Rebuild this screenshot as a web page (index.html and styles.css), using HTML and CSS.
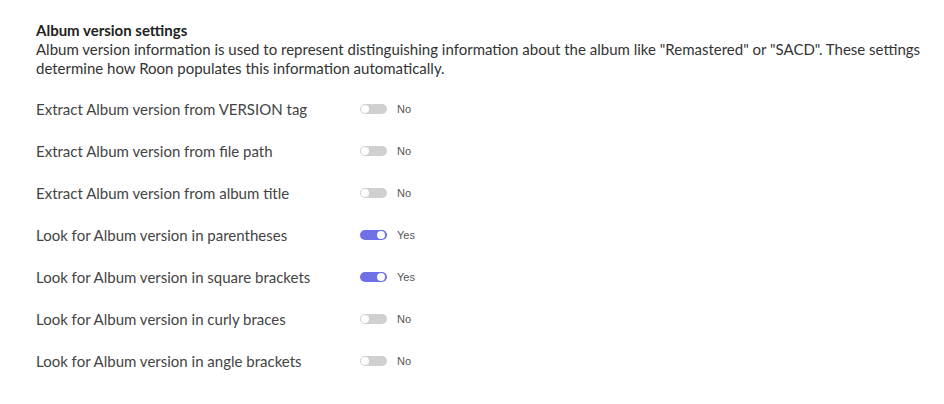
FILE: index.html
```html
<!DOCTYPE html>
<html lang="en">

<head>
    <meta charset="UTF-8">
    <title>Album version settings</title>
    <link rel="stylesheet" href="styles.css">
</head>

<body>
    <section class="settings">
        <h2 class="settings-title">Album version settings</h2>
        <p class="settings-desc">Album version information is used to represent distinguishing information about the album like "Remastered" or "SACD". These settings determine how Roon populates this information automatically.</p>

        <div class="rows">
            <div class="row">
                <span class="label">Extract Album version from VERSION tag</span>
                <span class="toggle"><span class="knob"></span></span>
                <span class="state">No</span>
            </div>
            <div class="row">
                <span class="label">Extract Album version from file path</span>
                <span class="toggle"><span class="knob"></span></span>
                <span class="state">No</span>
            </div>
            <div class="row">
                <span class="label">Extract Album version from album title</span>
                <span class="toggle"><span class="knob"></span></span>
                <span class="state">No</span>
            </div>
            <div class="row">
                <span class="label">Look for Album version in parentheses</span>
                <span class="toggle on"><span class="knob"></span></span>
                <span class="state">Yes</span>
            </div>
            <div class="row">
                <span class="label">Look for Album version in square brackets</span>
                <span class="toggle on"><span class="knob"></span></span>
                <span class="state">Yes</span>
            </div>
            <div class="row">
                <span class="label">Look for Album version in curly braces</span>
                <span class="toggle"><span class="knob"></span></span>
                <span class="state">No</span>
            </div>
            <div class="row">
                <span class="label">Look for Album version in angle brackets</span>
                <span class="toggle"><span class="knob"></span></span>
                <span class="state">No</span>
            </div>
        </div>
    </section>
</body>

</html>
```

FILE: styles.css
```css
body {
    margin: 0;
    background: #fff;
    font-family: Lato, "Open Sans", sans-serif;
    color: #333;
}

.settings {
    padding: 21px 10px 0 36px;
}

.settings-title {
    margin: 0;
    font-size: 15px;
    line-height: 19px;
    font-weight: 700;
    color: #222;
}

.settings-desc {
    margin: 0;
    font-size: 15px;
    line-height: 19px;
    color: #333;
}

.rows {
    margin-top: 10px;
}

.row {
    display: flex;
    align-items: center;
    height: 42px;
}

.label {
    width: 324px;
    font-size: 15px;
    color: #444;
}

.toggle {
    position: relative;
    width: 27px;
    height: 10px;
    border-radius: 5px;
    background: #d0d0d0;
}

.toggle .knob {
    position: absolute;
    top: 1px;
    left: 1px;
    width: 8px;
    height: 8px;
    border-radius: 50%;
    background: #fff;
}

.toggle.on {
    background: #6f6fe6;
}

.toggle.on .knob {
    left: auto;
    right: 2px;
}

.state {
    margin-left: 10px;
    font-family: "Liberation Sans", Arial, sans-serif;
    font-size: 11px;
    color: #555;
}
```
